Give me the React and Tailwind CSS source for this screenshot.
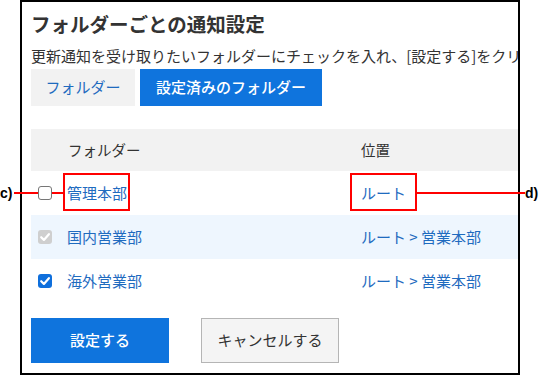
import React from "react";

const font = { fontFamily: '"Noto Sans CJK JP", "Noto Sans", sans-serif' };

function CheckMark({ color = "#fff" }) {
  return (
    <svg viewBox="0 0 14 14" className="w-full h-full">
      <path d="M3.2 7.2 L5.9 9.9 L10.9 4.2" fill="none" stroke={color} strokeWidth="2.2" strokeLinecap="round" strokeLinejoin="round" />
    </svg>
  );
}

function Box({ state }) {
  if (state === "checked") {
    return (
      <div className="w-[14px] h-[14px] rounded-[3px] bg-[#0f6fdc]">
        <CheckMark />
      </div>
    );
  }
  if (state === "disabled") {
    return (
      <div className="w-[14px] h-[14px] rounded-[3px] bg-[#cfcfcf]">
        <CheckMark />
      </div>
    );
  }
  return <div className="relative z-10 w-[14px] h-[14px] rounded-[3px] border border-[#767676] bg-white" />;
}

const rows = [
  { name: "管理本部", path: "ルート", state: "empty", bg: "bg-white" },
  { name: "国内営業部", path: "ルート\u00a0>\u00a0営業本部", state: "disabled", bg: "bg-[#eef6fe]" },
  { name: "海外営業部", path: "ルート\u00a0>\u00a0営業本部", state: "checked", bg: "bg-white" },
];

export default function App() {
  return (
    <div className="relative w-[541px] h-[375px] bg-white overflow-hidden" style={font}>
      {/* screenshot frame */}
      <div className="ml-[20px] w-[500px] h-[375px] border-2 border-black overflow-hidden pl-[9px]">
        <h1 className="mt-[8px] h-[28px] leading-[28px] text-[19.5px] font-bold text-[#333] whitespace-nowrap">
          フォルダーごとの通知設定
        </h1>
        <p className="mt-[7px] h-[22px] leading-[22px] text-[15px] text-[#333] whitespace-nowrap">
          更新通知を受け取りたいフォルダーにチェックを入れ、[設定する]をクリックしてください。
        </p>

        {/* tabs */}
        <div className="mt-[2px] flex gap-[5px]">
          <div className="h-[37px] px-[14.5px] flex items-center bg-[#f2f2f2] text-[15px] text-[#1f6bbf]">
            フォルダー
          </div>
          <div className="h-[37px] px-[16px] flex items-center bg-[#0f74dd] text-[15px] text-white font-medium">
            設定済みのフォルダー
          </div>
        </div>

        {/* table */}
        <div className="mt-[23px] w-[500px]">
          <div className="grid grid-cols-[36px_294px_1fr] h-[42px] items-center bg-[#f2f2f2] text-[14.5px] text-[#333]">
            <div />
            <div className="pl-px">フォルダー</div>
            <div>位置</div>
          </div>
          {rows.map((r) => (
            <div key={r.name} className={`grid grid-cols-[36px_294px_1fr] h-[44px] items-center text-[15px] text-[#1f6bbf] ${r.bg}`}>
              <div className="pl-[7px]">
                <Box state={r.state} />
              </div>
              <div>{r.name}</div>
              <div className="whitespace-nowrap">{r.path}</div>
            </div>
          ))}
        </div>

        {/* buttons */}
        <div className="mt-[15px] flex gap-[32px]">
          <button className="w-[138px] h-[45px] bg-[#0f74dd] text-white text-[15px] font-medium">
            設定する
          </button>
          <button className="w-[138px] h-[45px] bg-[#f4f4f4] border border-[#b5b5b5] text-[#333] text-[15px]">
            キャンセルする
          </button>
        </div>
      </div>

      {/* annotations */}
      <div className="absolute left-[63px] top-[173px] w-[67px] h-[38px] border-2 border-[#ff0000]" />
      <div className="absolute left-[350px] top-[173px] w-[67px] h-[38px] border-2 border-[#ff0000]" />
      <div className="absolute left-[14px] top-[192px] w-[49px] h-[2px] bg-[#ff0000]" />
      <div className="absolute left-[417px] top-[192px] w-[108px] h-[2px] bg-[#ff0000]" />
      <span
        className="absolute left-0 top-[184px] text-[14px] font-bold text-black leading-[18px]"
        style={{ fontFamily: '"Liberation Sans", Arial, sans-serif' }}
      >
        c)
      </span>
      <span
        className="absolute left-[525px] top-[184px] text-[14px] font-bold text-black leading-[18px]"
        style={{ fontFamily: '"Liberation Sans", Arial, sans-serif' }}
      >
        d)
      </span>
    </div>
  );
}
